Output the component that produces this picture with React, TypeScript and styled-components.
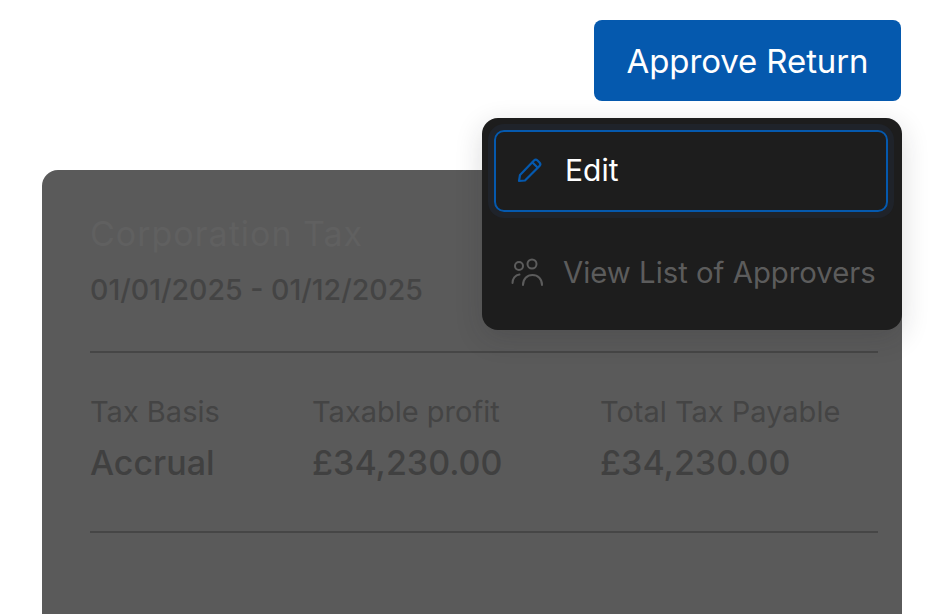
import styled, { createGlobalStyle } from "styled-components";

const GlobalStyle = createGlobalStyle`
  html, body {
    margin: 0;
    height: 100%;
    background: #fff;
    overflow: hidden;
  }
  * {
    box-sizing: border-box;
  }
`;

const Page = styled.div`
  position: relative;
  width: 942px;
  height: 614px;
  overflow: hidden;
  padding: 20px 40px 0 42px;
  display: flex;
  flex-direction: column;
  font-family: "Inter", "Liberation Sans", sans-serif;
`;

const ApproveButton = styled.button`
  align-self: flex-end;
  width: 307px;
  height: 81px;
  margin-right: 1px;
  flex-shrink: 0;
  border: 0;
  border-radius: 8px;
  background: #0559ae;
  color: #fff;
  font-family: inherit;
  font-size: 33px;
  font-weight: 400;
  letter-spacing: -0.1px;
`;

const Card = styled.section`
  margin-top: 69px;
  flex: 1;
  border-radius: 16px 16px 0 0;
  background: #5a5a5a;
  padding: 45px 24px 0 48px;
`;

const Title = styled.h2`
  margin: 0;
  font-size: 34px;
  line-height: 38px;
  font-weight: 400;
  letter-spacing: 1px;
  color: #606060;
`;

const Period = styled.p`
  margin: 19px 0 0;
  font-size: 28.5px;
  line-height: 36px;
  font-weight: 500;
  color: #444;
`;

const Rule = styled.hr`
  margin: 0;
  border: 0;
  height: 2px;
  background: #464646;
`;

const TopRule = styled(Rule)`
  margin-top: 43px;
`;

const Stats = styled.div`
  display: grid;
  grid-template-columns: 222px 288px 1fr;
  padding: 41px 0 48px;
`;

const Stat = styled.div`
  display: flex;
  flex-direction: column;
  gap: 13px;
`;

const StatLabel = styled.span`
  font-size: 29px;
  line-height: 36px;
  color: #444;
`;

const StatValue = styled.span`
  font-size: 34px;
  line-height: 40px;
  font-weight: 500;
  color: #404040;
`;

const Menu = styled.div`
  position: absolute;
  top: 118px;
  left: 482px;
  width: 420px;
  height: 212px;
  border-radius: 16px;
  background: #1d1d1d;
  padding: 12px 14px 12px 12px;
  box-shadow: 0 8px 28px rgba(30, 32, 38, 0.16);
`;

const MenuItem = styled.div<{ $active?: boolean }>`
  display: flex;
  align-items: center;
  height: 82px;
  border-radius: 10px;
  color: ${(p) => (p.$active ? "#fff" : "#5c5c5c")};
  font-size: ${(p) => (p.$active ? "30px" : "29.3px")};
  padding-left: ${(p) => (p.$active ? "21px" : "17px")};
  padding-bottom: 2px;
  gap: ${(p) => (p.$active ? "22px" : "20px")};
  margin-top: ${(p) => (p.$active ? "0" : "20px")};
  border: ${(p) => (p.$active ? "2px solid #0559ae" : "0")};
  box-shadow: ${(p) => (p.$active ? "0 0 0 6px #1f232a" : "none")};
`;

const IconSvg = styled.svg`
  flex-shrink: 0;
  fill: none;
  stroke: currentColor;
  stroke-linecap: round;
  stroke-linejoin: round;
`;

const PencilIcon = styled(IconSvg)`
  width: 26px;
  height: 26px;
  stroke: #0559ae;
  stroke-width: 2.2;
`;

const PeopleIcon = styled(IconSvg)`
  width: 32px;
  height: 28px;
  stroke-width: 2;
`;

export default function App() {
  return (
    <>
      <GlobalStyle />
      <Page>
        <ApproveButton>Approve Return</ApproveButton>
        <Card>
          <Title>Corporation Tax</Title>
          <Period>01/01/2025 - 01/12/2025</Period>
          <TopRule />
          <Stats>
            <Stat>
              <StatLabel>Tax Basis</StatLabel>
              <StatValue>Accrual</StatValue>
            </Stat>
            <Stat>
              <StatLabel>Taxable profit</StatLabel>
              <StatValue>£34,230.00</StatValue>
            </Stat>
            <Stat>
              <StatLabel>Total Tax Payable</StatLabel>
              <StatValue>£34,230.00</StatValue>
            </Stat>
          </Stats>
          <Rule />
        </Card>
        <Menu>
          <MenuItem $active>
            <PencilIcon viewBox="0 0 26 26">
              <path d="M2 24l1-6L17 3.500a2.500 2.500 0 0 1 3.500 0l2 2a2.500 2.500 0 0 1 0 3.500L8 23.500z" />
              <path d="M15.500 5.500l5 5" />
            </PencilIcon>
            Edit
          </MenuItem>
          <MenuItem>
            <PeopleIcon viewBox="0 0 32 28">
              <circle cx="8" cy="8" r="4" />
              <circle cx="21" cy="6" r="4.500" />
              <path d="M1.500 25c0-4 2.500-8 7-8.500" />
              <path d="M12 27c0-6 4-10 9.500-10S31 21 31 27" />
            </PeopleIcon>
            View List of Approvers
          </MenuItem>
        </Menu>
      </Page>
    </>
  );
}
